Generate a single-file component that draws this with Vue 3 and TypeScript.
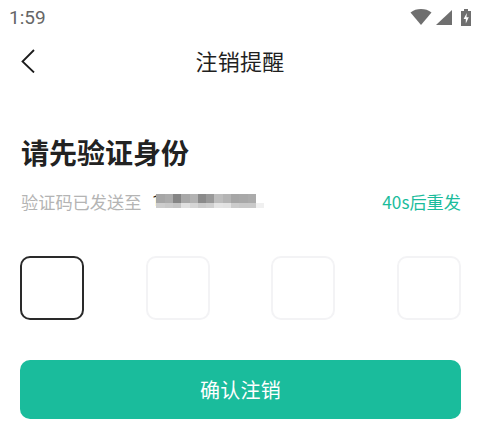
<script setup lang="ts">
const top = ['#a6a6a6','#ababab','#858585','#a8a8a8','#b2b2b2','#8a8a8a','#999999','#bdbdbd','#b4b4b4','#a6a6a6','#a8a8a8','#ababab']
const bottom = ['#cdcdcd','#c9c9c9','#c4c4c4','#e0e0e0','#d6d6d6','#cbcbcb','#cfcfcf','#e4e4e4','#e2e2e2','#cccccc','#c9c9c9','#c9c9c9','#f0f0f0']
const boxes = [true, false, false, false]
</script>

<template>
  <div class="page">
    <div class="status">
      <span class="time">1:59</span>
      <div class="status-icons">
        <svg width="22" height="16" viewBox="0 0 22 16"><path d="M0.5 3.500C3.500 1 7 0 11 0s7.500 1 10.500 3.500L11 16z" fill="#6f6f6f"/></svg>
        <svg class="cell" width="16" height="15" viewBox="0 0 16 15"><path d="M0 15L16 0v15z" fill="#6f6f6f"/></svg>
        <svg class="battery" width="10" height="17" viewBox="0 0 10 17"><path d="M3 0h4v2h3v15H0V2h3z" fill="#6f6f6f"/><path d="M5.800 4L2.600 10h2.200v4.500L7.800 8.200H5.500z" fill="#fff"/></svg>
      </div>
    </div>

    <header class="nav">
      <svg class="back" width="14" height="24" viewBox="0 0 14 24"><path d="M13 1L1.500 12.500 13 23.500" fill="none" stroke="#1c1c1c" stroke-width="1.800"/></svg>
      <h1 class="nav-title">注销提醒</h1>
    </header>

    <main class="content">
      <h2 class="heading">请先验证身份</h2>
      <div class="sent">
        <div class="sent-left">
          <span>验证码已发送至</span>
          <span class="phone">
            <span class="one">1</span>
            <span class="mosaic">
              <span class="mosaic-row"><i v-for="(c, i) in top" :key="i" :style="{ background: c }"></i></span>
              <span class="mosaic-row low"><i v-for="(c, i) in bottom" :key="i" :style="{ background: c }"></i></span>
            </span>
          </span>
        </div>
        <span class="resend">40s后重发</span>
      </div>

      <div class="codes">
        <div v-for="(active, i) in boxes" :key="i" class="code" :class="{ active }"></div>
      </div>

      <button class="confirm" type="button">确认注销</button>
    </main>
  </div>
</template>

<style scoped>
.page {
  width: 480px;
  height: 430px;
  overflow: hidden;
  background: #fff;
  font-family: "Noto Sans CJK SC", "Noto Sans", sans-serif;
}
.status {
  height: 34px;
  padding: 0 9px 0 9px;
  display: flex;
  align-items: center;
  justify-content: space-between;
}
.time {
  font-family: Roboto, sans-serif;
  font-size: 19px;
  color: #666;
}
.status-icons {
  display: flex;
  align-items: center;
}
.cell {
  margin-left: 4px;
}
.battery {
  margin-left: 9px;
}
.nav {
  height: 54px;
  position: relative;
  display: flex;
  align-items: center;
  justify-content: center;
}
.back {
  position: absolute;
  left: 21px;
  top: 15px;
}
.nav-title {
  margin: 0;
  font-size: 22px;
  line-height: 52px;
  height: 54px;
  font-weight: 400;
  color: #1f1f1f;
  letter-spacing: 0.2px;
}
.content {
  padding: 44px 19px 0 20px;
}
.heading {
  margin: 0 0 0 1px;
  height: 40px;
  line-height: 40px;
  font-size: 28px;
  font-weight: 700;
  color: #222;
}
.sent {
  margin-top: 16px;
  height: 26px;
  display: flex;
  align-items: center;
  justify-content: space-between;
  font-size: 17.200px;
}
.sent-left {
  display: flex;
  align-items: center;
  color: #b4b4b4;
  padding-left: 1px;
}
.phone {
  margin-left: 11px;
  display: flex;
  align-items: center;
  height: 16px;
}
.one {
  width: 4px;
  font-family: Roboto, sans-serif;
  font-size: 15px;
  color: #222;
}
.mosaic {
  display: flex;
  flex-direction: column;
  filter: blur(0.7px);
}
.mosaic-row {
  display: flex;
  height: 9px;
}
.mosaic-row.low {
  height: 5px;
}
.mosaic-row i {
  width: 8.300px;
  display: block;
}
.resend {
  color: #1abc9c;
}
.codes {
  margin-top: 42px;
  display: flex;
  justify-content: space-between;
}
.code {
  width: 64px;
  height: 64px;
  box-sizing: border-box;
  border: 2px solid #f3f3f5;
  border-radius: 10px;
}
.code.active {
  border-color: #2a2a2a;
}
.confirm {
  display: block;
  width: 100%;
  height: 59px;
  margin-top: 40px;
  border: 0;
  border-radius: 10px;
  background: #1abc9c;
  color: #fff;
  font: inherit;
  font-size: 20px;
  letter-spacing: 0.2px;
}
</style>
